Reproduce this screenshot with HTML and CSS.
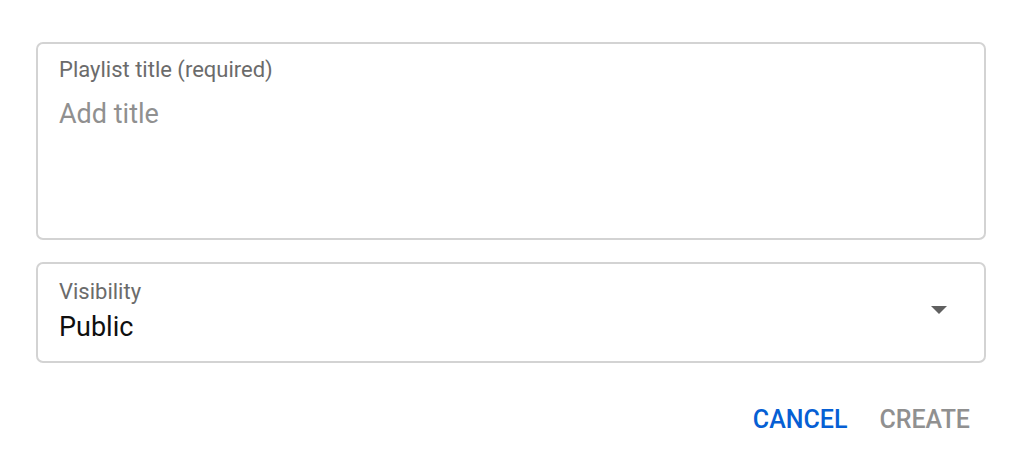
FILE: index.html
```html
<!DOCTYPE html>
<html>
<head>
<meta charset="utf-8">
<link rel="stylesheet" href="styles.css">
</head>
<body>
<div class="dialog">
  <div class="field field-title">
    <div class="label">Playlist title (required)</div>
    <div class="input placeholder">Add title</div>
  </div>
  <div class="field field-select">
    <div class="select-text">
      <div class="label">Visibility</div>
      <div class="input">Public</div>
    </div>
    <span class="arrow"></span>
  </div>
  <div class="actions">
    <button class="btn btn-cancel">Cancel</button>
    <button class="btn btn-create">Create</button>
  </div>
</div>
</body>
</html>
```
FILE: styles.css
```css
html, body {
  margin: 0;
  padding: 0;
  background: #ffffff;
}
body {
  font-family: Roboto, "Noto Sans", Arial, sans-serif;
}
.dialog {
  display: flex;
  flex-direction: column;
  padding: 42px 40px 0 36px;
  gap: 22px;
}
.field {
  border: 2px solid #d3d3d3;
  border-radius: 7px;
  padding: 14px 22px 0 21px;
  box-sizing: border-box;
}
.field-title {
  height: 198px;
}
.field-select {
  height: 101px;
  display: flex;
  align-items: flex-start;
  justify-content: space-between;
  padding-top: 16px;
  padding-right: 37px;
}
.label {
  font-size: 22px;
  line-height: 24px;
  color: #6b6b6b;
}
.input {
  font-size: 27px;
  line-height: 32px;
  color: #0f0f0f;
  margin-top: 16px;
}
.field-select .input {
  margin-top: 7px;
}
.placeholder {
  color: #909090;
}
.arrow {
  width: 0;
  height: 0;
  border-left: 8px solid transparent;
  border-right: 8px solid transparent;
  border-top: 8px solid #606060;
  margin-top: 26px;
}
.actions {
  display: flex;
  justify-content: flex-end;
  margin-top: 11px;
}
.btn {
  background: none;
  border: none;
  font-family: Roboto, "Noto Sans", Arial, sans-serif;
  font-weight: 500;
  font-size: 25px;
  line-height: 28px;
  text-transform: uppercase;
  padding: 10px 16px;
  cursor: pointer;
}
.btn-cancel {
  color: #065fd4;
}
.btn-create {
  color: #909090;
}
```
